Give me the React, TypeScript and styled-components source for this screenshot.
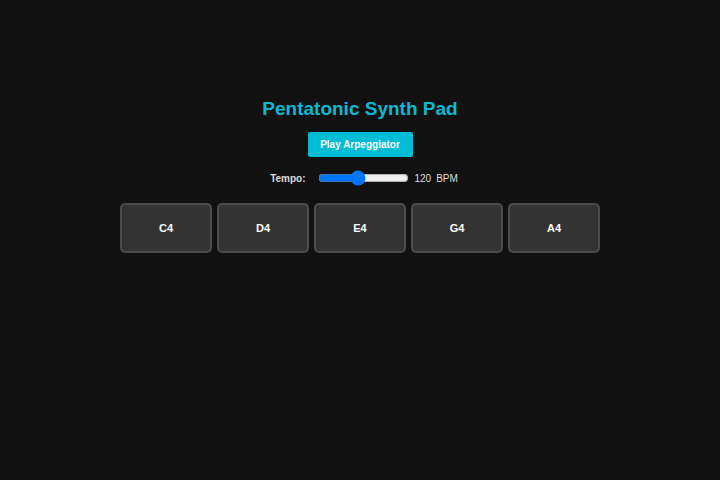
import React, { useState } from "react";
import styled, { createGlobalStyle } from "styled-components";

const Global = createGlobalStyle`
  html, body { margin: 0; padding: 0; background: #111111; }
  body { font-family: "Liberation Sans", Arial, sans-serif; color: #eeeeee; }
`;

const Page = styled.div`
  width: 720px;
  height: 480px;
  box-sizing: border-box;
  padding-top: 97px;
  display: flex;
  flex-direction: column;
  align-items: center;
`;

const Title = styled.h1`
  margin: 0;
  font-size: 19px;
  line-height: 24px;
  font-weight: 700;
  color: #0fb8d0;
`;

const PlayButton = styled.button`
  margin-top: 11px;
  height: 25px;
  width: 105px;
  border: none;
  border-radius: 2px;
  background: #00bcd4;
  color: #ffffff;
  font-family: "Liberation Sans", Arial, sans-serif;
  font-size: 10px;
  font-weight: 700;
  cursor: pointer;
`;

const TempoRow = styled.div`
  margin-top: 14px;
  padding-left: 8px;
  height: 14px;
  display: flex;
  align-items: center;
  font-size: 10px;
  color: #dddddd;
`;

const TempoLabel = styled.label`
  font-weight: 700;
  margin-right: 12px;
`;

const Slider = styled.input`
  width: 91px;
  margin: 0 6px 0 0;
  accent-color: #0075ff;
`;

const Unit = styled.span`
  margin-left: 5px;
`;

const Pads = styled.div`
  margin-top: 18px;
  display: grid;
  grid-template-columns: repeat(5, 92px);
  gap: 5px;
`;

const Pad = styled.button`
  height: 50px;
  box-sizing: border-box;
  border: 2px solid #4d4d4d;
  border-radius: 5px;
  background: #333333;
  color: #ffffff;
  font-family: "Liberation Sans", Arial, sans-serif;
  font-size: 11px;
  font-weight: 700;
  cursor: pointer;
`;

const notes = ["C4", "D4", "E4", "G4", "A4"];

export default function App() {
  const [tempo, setTempo] = useState(120);
  return (
    <>
      <Global />
      <Page>
        <Title>Pentatonic Synth Pad</Title>
        <PlayButton>Play Arpeggiator</PlayButton>
        <TempoRow>
          <TempoLabel htmlFor="tempo">Tempo:</TempoLabel>
          <Slider
            id="tempo"
            type="range"
            min={60}
            max={200}
            value={tempo}
            onChange={(e) => setTempo(Number(e.target.value))}
          />
          <span>{tempo}</span>
          <Unit>BPM</Unit>
        </TempoRow>
        <Pads>
          {notes.map((n) => (
            <Pad key={n}>{n}</Pad>
          ))}
        </Pads>
      </Page>
    </>
  );
}
